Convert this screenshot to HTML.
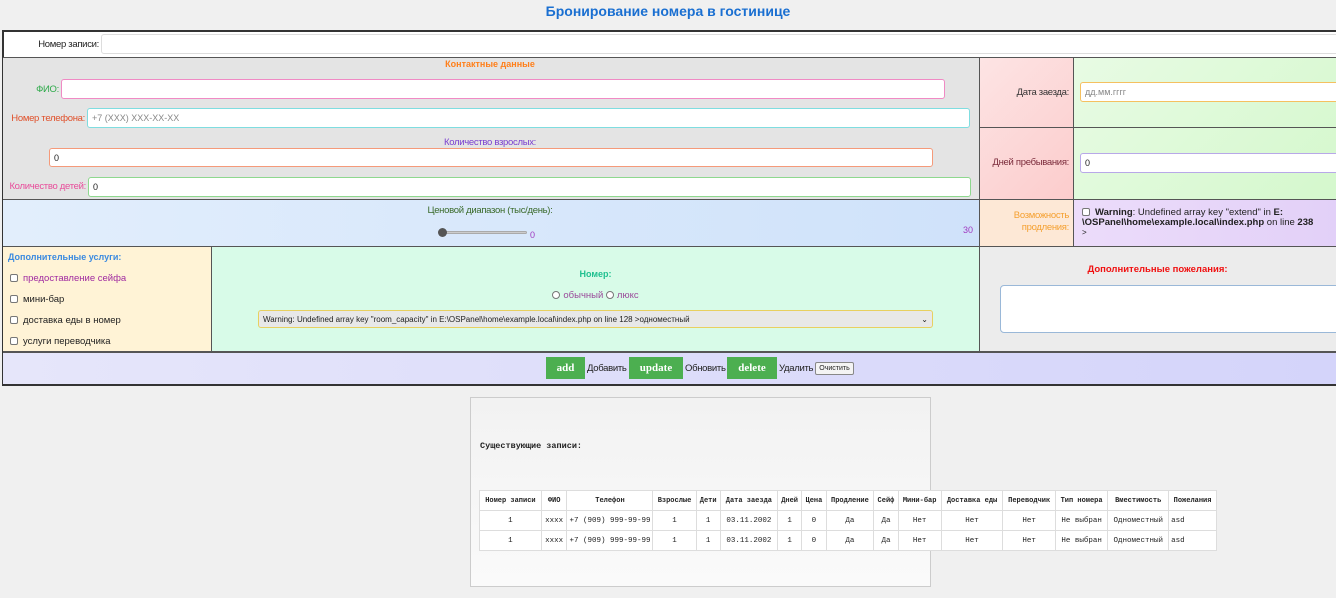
<!DOCTYPE html>
<html><head><meta charset="utf-8"><style>
*{box-sizing:border-box;margin:0;padding:0}
body{width:1336px;height:598px;background:#f0f0f0;font-family:"Liberation Sans",sans-serif;font-size:10px;position:relative;overflow:hidden;color:#222}
.a{position:absolute}
.in{position:absolute;background:#fff;border:1px solid #ccc;border-radius:3px;font-size:9px;padding-left:4px;display:flex;align-items:center;color:#222;white-space:nowrap}
.lab{position:absolute;font-size:9.5px;text-align:right;white-space:nowrap;letter-spacing:-0.3px}
.cb{display:inline-block;width:8px;height:8px;border:1px solid #777;border-radius:2px;background:#fff;vertical-align:-1px;margin-right:5px}
.btn{position:absolute;background:#4caf50;color:#fff;font-family:"Liberation Serif",serif;font-weight:bold;font-size:11px;display:flex;align-items:center;justify-content:center;top:357px;height:22px}
table{border-collapse:collapse;font-family:"Liberation Mono",monospace;font-size:7.5px}
td,th{border:1px solid #ddd;height:20px;text-align:center;padding:0 2px;background:#fff;white-space:nowrap}
th{font-weight:bold;font-size:7px}
</style></head><body>
<div class="a" style="left:0;top:3px;width:1336px;text-align:center;color:#1a6fd1;font-weight:bold;font-size:14px">Бронирование номера в гостинице</div>
<div class="a" style="left:2px;top:30px;width:1340px;height:356px;border:2px solid #333;background:#fff"></div>
<div class="lab" style="left:10px;top:39px;width:89px;color:#222">Номер записи:</div>
<div class="in" style="left:101px;top:34px;width:1240px;height:20px;border-color:#ddd"></div>
<div class="a" style="left:3px;top:57px;width:976px;height:142px;background:#e4e4e4;border-top:1px solid #555"></div>
<div class="a" style="left:979px;top:57px;width:95px;height:142px;background:linear-gradient(135deg,#fde4e4,#fccccc);border:1px solid #555;border-bottom:none"></div>
<div class="a" style="left:1074px;top:57px;width:270px;height:142px;background:linear-gradient(135deg,#e8fbe4,#d4f8cc);border-top:1px solid #555"></div>
<div class="a" style="left:979px;top:127px;width:360px;height:1px;background:#555"></div>
<div class="a" style="left:0;top:59px;width:980px;text-align:center;color:#ff7f1a;font-weight:bold;font-size:9px">Контактные данные</div>
<div class="lab" style="left:20px;top:84px;width:39px;color:#2eaa4a">ФИО:</div>
<div class="in" style="left:61px;top:79px;width:884px;height:20px;border-color:#f08ac4"></div>
<div class="lab" style="left:5px;top:113px;width:80px;color:#e0502a">Номер телефона:</div>
<div class="in" style="left:87px;top:108px;width:883px;height:20px;border-color:#7fdde0;color:#888">+7 (XXX) XXX-XX-XX</div>
<div class="a" style="left:0;top:137px;width:980px;text-align:center;color:#7a3fd0;font-size:9.5px;letter-spacing:-0.3px">Количество взрослых:</div>
<div class="in" style="left:49px;top:148px;width:884px;height:19px;border-color:#f59a7a">0</div>
<div class="lab" style="left:2px;top:181px;width:84px;color:#e84c9a">Количество детей:</div>
<div class="in" style="left:88px;top:177px;width:883px;height:20px;border-color:#8ed88e">0</div>
<div class="lab" style="left:985px;top:87px;width:84px;color:#333">Дата заезда:</div>
<div class="in" style="left:1080px;top:82px;width:260px;height:20px;border-color:#f5c060;color:#888">дд.мм.гггг</div>
<div class="lab" style="left:985px;top:157px;width:84px;color:#7a2a3a">Дней пребывания:</div>
<div class="in" style="left:1080px;top:153px;width:260px;height:20px;border-color:#b8a8e8">0</div>
<div class="a" style="left:3px;top:199px;width:976px;height:47px;background:linear-gradient(90deg,#e2eefc,#cfe2fa);border-top:1px solid #555"></div>
<div class="a" style="left:979px;top:199px;width:95px;height:47px;background:#fde8d6;border:1px solid #555;border-bottom:none"></div>
<div class="a" style="left:1074px;top:199px;width:270px;height:47px;background:linear-gradient(90deg,#ecdcfa,#e2d0f8);border-top:1px solid #555"></div>
<div class="a" style="left:0;top:205px;width:980px;text-align:center;color:#3a6a2a;font-size:9.5px;letter-spacing:-0.3px">Ценовой диапазон (тыс/день):</div>
<div class="a" style="left:440px;top:231px;width:87px;height:3px;background:#ccc;border:1px solid #aaa;border-radius:2px"></div>
<div class="a" style="left:438px;top:228px;width:9px;height:9px;border-radius:50%;background:#555"></div>
<div class="a" style="left:530px;top:230px;color:#a03ac0;font-size:9px">0</div>
<div class="a" style="left:963px;top:225px;color:#a03ac0;font-size:9px">30</div>
<div class="lab" style="left:985px;top:210px;width:84px;color:#f5a030;line-height:12px;white-space:normal">Возможность продления:</div>
<div class="a" style="left:1082px;top:208px;width:250px;font-size:9.5px;line-height:10px;color:#222"><span class="cb"></span><b>Warning</b>: Undefined array key "extend" in <b>E:<br>\OSPanel\home\example.local\index.php</b> on line <b>238</b><br><span style="font-size:8px">&gt;</span></div>
<div class="a" style="left:3px;top:246px;width:209px;height:105px;background:#fff3d6;border-top:1px solid #555;border-right:1px solid #555"></div>
<div class="a" style="left:212px;top:246px;width:767px;height:105px;background:#d8fbe8;border-top:1px solid #555"></div>
<div class="a" style="left:979px;top:246px;width:360px;height:105px;background:#ececec;border:1px solid #555;border-bottom:none"></div>
<div class="a" style="left:8px;top:252px;color:#3a8ae0;font-weight:bold;font-size:9px">Дополнительные услуги:</div>
<div class="a" style="left:10px;top:273px;color:#a02aa0;font-size:9.5px"><span class="cb"></span>предоставление сейфа</div>
<div class="a" style="left:10px;top:294px;font-size:9.5px"><span class="cb"></span>мини-бар</div>
<div class="a" style="left:10px;top:315px;font-size:9.5px"><span class="cb"></span>доставка еды в номер</div>
<div class="a" style="left:10px;top:336px;font-size:9.5px"><span class="cb"></span>услуги переводчика</div>
<div class="a" style="left:212px;top:269px;width:767px;text-align:center;color:#20c090;font-weight:bold;font-size:9px">Номер:</div>
<div class="a" style="left:212px;top:290px;width:767px;text-align:center;color:#9a4a9a;font-size:9.5px"><span class="cb" style="border-radius:50%;margin-right:3px"></span>обычный <span class="cb" style="border-radius:50%;margin-right:3px"></span>люкс</div>
<div class="in" style="left:258px;top:310px;width:675px;height:18px;background:#e8e8e8;border-color:#e8d060;font-size:8px">Warning: Undefined array key "room_capacity" in E:\OSPanel\home\example.local\index.php on line 128 &gt;одноместный<span style="position:absolute;right:4px">⌄</span></div>
<div class="a" style="left:979px;top:264px;width:357px;text-align:center;color:#f01010;font-weight:bold;font-size:9.5px">Дополнительные пожелания:</div>
<div class="a" style="left:1000px;top:285px;width:340px;height:48px;background:#fff;border:1px solid #9ab8d8;border-radius:4px"></div>
<div class="a" style="left:3px;top:351px;width:1336px;height:33px;background:linear-gradient(90deg,#e6e6fa,#d4d4fa);border-top:2px solid #555"></div>
<div class="btn" style="left:546px;width:39px">add</div>
<div class="a" style="left:587px;top:363px;font-size:9.5px;letter-spacing:-0.3px">Добавить</div>
<div class="btn" style="left:629px;width:54px">update</div>
<div class="a" style="left:685px;top:363px;font-size:9.5px;letter-spacing:-0.3px">Обновить</div>
<div class="btn" style="left:727px;width:50px">delete</div>
<div class="a" style="left:779px;top:363px;font-size:9.5px;letter-spacing:-0.3px">Удалить</div>
<div class="a" style="left:815px;top:362px;width:39px;height:13px;background:#f4f4f4;border:1px solid #888;border-radius:2px;font-size:7px;text-align:center;line-height:11px">Очистить</div>
<div class="a" style="left:470px;top:397px;width:461px;height:190px;background:linear-gradient(180deg,#f2f2f2,#fafafa);border:1px solid #ccc"></div>
<div class="a" style="left:480px;top:441px;font-family:'Liberation Mono',monospace;font-weight:bold;font-size:8.5px">Существующие записи:</div>
<table class="a" style="left:479px;top:490px;width:738px">
<tr><th>Номер записи</th><th>ФИО</th><th style="width:86px">Телефон</th><th>Взрослые</th><th>Дети</th><th>Дата заезда</th><th>Дней</th><th>Цена</th><th>Продление</th><th>Сейф</th><th>Мини-бар</th><th>Доставка еды</th><th>Переводчик</th><th>Тип номера</th><th>Вместимость</th><th>Пожелания</th></tr>
<tr><td>1</td><td>xxxx</td><td>+7 (909) 999-99-99</td><td>1</td><td>1</td><td>03.11.2002</td><td>1</td><td>0</td><td>Да</td><td>Да</td><td>Нет</td><td>Нет</td><td>Нет</td><td>Не выбран</td><td>Одноместный</td><td style="text-align:left">asd</td></tr>
<tr><td>1</td><td>xxxx</td><td>+7 (909) 999-99-99</td><td>1</td><td>1</td><td>03.11.2002</td><td>1</td><td>0</td><td>Да</td><td>Да</td><td>Нет</td><td>Нет</td><td>Нет</td><td>Не выбран</td><td>Одноместный</td><td style="text-align:left">asd</td></tr>
</table>
</body></html>
